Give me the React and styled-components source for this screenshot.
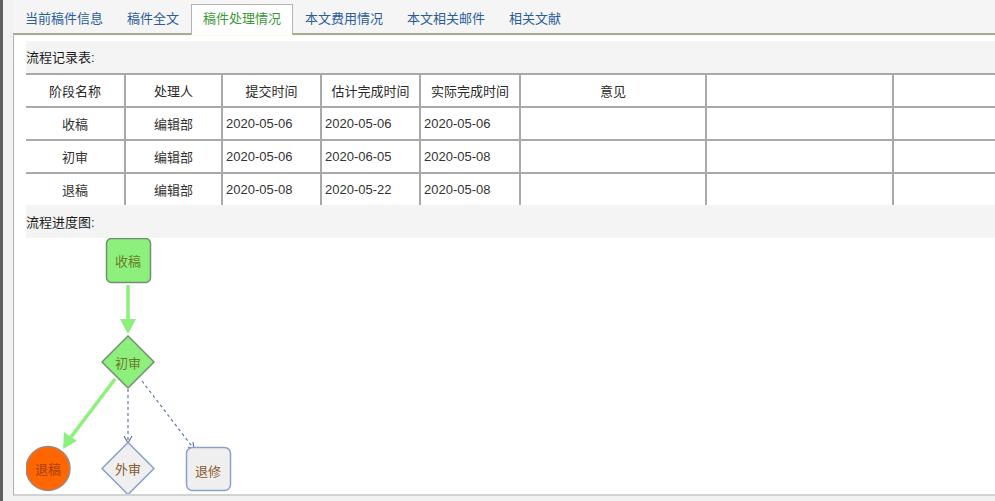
import React from 'react';
import styled, { createGlobalStyle } from 'styled-components';

const GlobalStyle = createGlobalStyle`
  html, body {
    margin: 0;
    padding: 0;
    background: #f2f2f2;
  }
  body {
    font-family: "Liberation Sans", "Noto Sans CJK SC", sans-serif;
    font-size: 13px;
    color: #333;
    overflow: hidden;
  }
`;

const Page = styled.div`
  width: 995px;
  height: 501px;
  box-sizing: border-box;
  border-left: 3px solid #5e5e5e;
  padding-left: 10px;
  background: #f2f2f2;
  display: flex;
  flex-direction: column;
  overflow: hidden;
`;

const TabBar = styled.div`
  display: flex;
  align-items: flex-end;
  height: 33px;
  flex-shrink: 0;
  border-bottom: 2px solid #a8a993;
  background: #f5f5f5;
`;

const Tab = styled.div`
  padding: 0 11px;
  height: ${p => (p.$active ? '30px' : '28px')};
  line-height: 27px;
  margin-bottom: ${p => (p.$active ? '-2px' : '0')};
  border: 1px solid ${p => (p.$active ? '#b4b4b4' : 'transparent')};
  border-bottom: none;
  background: ${p => (p.$active ? '#fff' : 'transparent')};
  color: ${p => (p.$active ? '#3b9a34' : '#2b5c9c')};
  white-space: nowrap;
  cursor: pointer;
`;

const Panel = styled.div`
  flex: 0 0 auto;
  height: 453px;
  background: #fff;
  border-left: 1px solid #b0b0b0;
  border-bottom: 2px solid #d2d2d2;
  border-top: 1px solid #fdfbe8;
  padding: 5px 0 0 12px;
  display: flex;
  flex-direction: column;
  overflow: hidden;
`;

const SectionTitle = styled.div`
  height: ${p => p.$h || 32}px;
  line-height: ${p => (p.$h || 32) + 2}px;
  background: #f4f4f4;
  color: #1c1c1c;
  flex-shrink: 0;
`;

const Table = styled.table`
  table-layout: fixed;
  border-collapse: separate;
  border-spacing: 0;
  width: 1066px;
  background: #fff;
  flex-shrink: 0;
`;

const Th = styled.th`
  height: 31px;
  padding: 0;
  font-weight: normal;
  text-align: center;
  border-top: 2px solid #a9a9a9;
  border-left: 2px solid #a9a9a9;
  color: #2a2a2a;
  &:first-child {
    border-left: none;
  }
`;

const Td = styled.td`
  height: 31px;
  padding: 0 0 0 ${p => (p.$left ? '3px' : '0')};
  text-align: ${p => (p.$left ? 'left' : 'center')};
  border-top: 2px solid #a9a9a9;
  border-left: 2px solid #a9a9a9;
  color: #333;
  white-space: nowrap;
  &:first-child {
    border-left: none;
  }
`;

const Chart = styled.svg`
  display: block;
  flex-shrink: 0;
  font-family: "Noto Sans CJK SC", sans-serif;
`;

const columns = [98, 97, 99, 99, 100, 186, 187, 200];
const headers = ['阶段名称', '处理人', '提交时间', '估计完成时间', '实际完成时间', '意见', '', ''];

const records = [
  { stage: '收稿', who: '编辑部', submit: '2020-05-06', plan: '2020-05-06', done: '2020-05-06' },
  { stage: '初审', who: '编辑部', submit: '2020-05-06', plan: '2020-06-05', done: '2020-05-08' },
  { stage: '退稿', who: '编辑部', submit: '2020-05-08', plan: '2020-05-22', done: '2020-05-08' },
];

const tabs = ['当前稿件信息', '稿件全文', '稿件处理情况', '本文费用情况', '本文相关邮件', '相关文献'];

const GREEN = '#8df07c';
const GREEN_EDGE = '#72906f';
const GREY_FILL = '#efefef';
const BLUE_EDGE = '#8a9fcb';
const DASH = '#5f78a8';

const Diamond = ({ cx, cy, r, fill, stroke }) => (
  <polygon
    points={`${cx},${cy - r} ${cx + r},${cy} ${cx},${cy + r} ${cx - r},${cy}`}
    fill={fill}
    stroke={stroke}
    strokeWidth="1.5"
  />
);

const Label = ({ x, y, color, children }) => (
  <text x={x} y={y} fill={color} fontSize="13" textAnchor="middle" dominantBaseline="central">
    {children}
  </text>
);

const FlowChart = () => (
  <Chart width="969" height="257" viewBox="0 0 969 257">
    {/* 收稿 -> 初审 */}
    <line x1="102" y1="47" x2="102" y2="84" stroke={GREEN} strokeWidth="3.5" />
    <polygon points="94,81 110,81 102,96" fill={GREEN} />

    {/* 初审 -> 退稿 */}
    <line x1="89" y1="141" x2="45" y2="199" stroke={GREEN} strokeWidth="3.5" />
    <polygon points="37,211 38,194 51,203" fill={GREEN} />

    {/* 初审 -> 外审 (dashed) */}
    <line x1="102" y1="151" x2="102" y2="204" stroke={DASH} strokeWidth="1.2" strokeDasharray="3 3" />
    <polyline points="98,198 102,205 106,198" fill="none" stroke={DASH} strokeWidth="1.2" />

    {/* 初审 -> 退修 (dashed) */}
    <line x1="116" y1="143" x2="168" y2="211" stroke={DASH} strokeWidth="1.2" strokeDasharray="3 3" />
    <polyline points="162,209 168,211 167,204" fill="none" stroke={DASH} strokeWidth="1.2" />

    {/* nodes */}
    <rect x="80.5" y="0.5" width="44" height="44" rx="5" fill={GREEN} stroke={GREEN_EDGE} strokeWidth="1.5" />
    <Label x={102} y={22} color="#6a7d2c">收稿</Label>

    <Diamond cx={102} cy={124} r={26} fill={GREEN} stroke={GREEN_EDGE} />
    <Label x={102} y={124} color="#6a7d2c">初审</Label>

    <circle cx="22" cy="230.5" r="22" fill="#ff6500" stroke="#a08a80" strokeWidth="1.5" />
    <Label x={22} y={230.5} color="#a8400c">退稿</Label>

    <Diamond cx={102} cy={230.5} r={26} fill={GREY_FILL} stroke={BLUE_EDGE} />
    <Label x={102} y={230.5} color="#8b5a2e">外审</Label>

    <rect x="160.5" y="209.5" width="44" height="43" rx="6" fill={GREY_FILL} stroke={BLUE_EDGE} strokeWidth="1.5" />
    <Label x={182} y={232} color="#8b5a2e">退修</Label>
  </Chart>
);

const App = () => (
  <>
    <GlobalStyle />
    <Page>
      <TabBar>
        {tabs.map(t => (
          <Tab key={t} $active={t === '稿件处理情况'}>{t}</Tab>
        ))}
      </TabBar>
      <Panel>
        <SectionTitle>流程记录表:</SectionTitle>
        <Table>
          <colgroup>
            {columns.map((w, i) => (
              <col key={i} style={{ width: w }} />
            ))}
          </colgroup>
          <thead>
            <tr>
              {headers.map((h, i) => (
                <Th key={i}>{h}</Th>
              ))}
            </tr>
          </thead>
          <tbody>
            {records.map(r => (
              <tr key={r.stage}>
                <Td>{r.stage}</Td>
                <Td>{r.who}</Td>
                <Td $left>{r.submit}</Td>
                <Td $left>{r.plan}</Td>
                <Td $left>{r.done}</Td>
                <Td />
                <Td />
                <Td />
              </tr>
            ))}
          </tbody>
        </Table>
        <SectionTitle $h={33}>流程进度图:</SectionTitle>
        <FlowChart />
      </Panel>
    </Page>
  </>
);

export default App;
